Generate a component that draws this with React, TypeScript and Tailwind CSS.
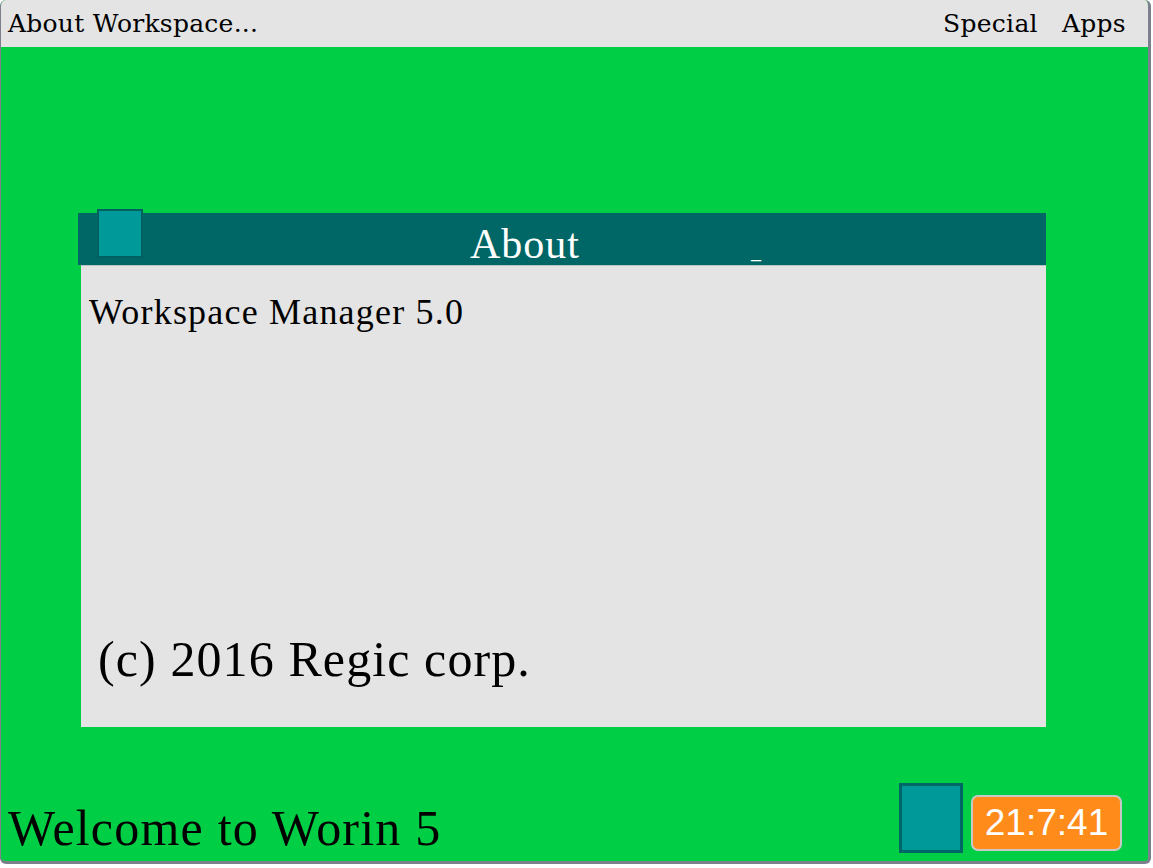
export default function App() {
  return (
    <div className="w-[1153px] h-[868px] bg-white">
      <div className="w-[1151px] h-[864px] flex flex-col overflow-hidden rounded-[6px] border-l border-r-[3px] border-b-[3px] border-[#7c7f8c] bg-[#00ce44]">
        {/* menu bar */}
        <div className="h-[47px] shrink-0 bg-[#e4e4e4] flex items-center pl-[7px] text-black font-['DejaVu_Serif',serif]">
          <span className="text-[25px] tracking-[0.25px]">About Workspace...</span>
          <div className="ml-auto flex gap-[24px] pr-[22px]">
            <span className="text-[25px] tracking-[0.3px]">Special</span>
            <span className="text-[25px] tracking-[0.3px]">Apps</span>
          </div>
        </div>

        {/* desktop */}
        <div className="flex-1 relative font-['Liberation_Serif',serif]">
          <div className="absolute left-[77px] top-[166px] w-[968px]">
            <div className="h-[52px] bg-[#006666] relative">
              <div className="absolute left-[19px] -top-[4px] w-[46px] h-[49px] bg-[#009999] border-2 border-[#006060]" />
              <div className="absolute left-[392px] top-[10px] text-white text-[42px] tracking-[1px] leading-none">About</div>
              <div className="absolute left-[673px] top-[28px] text-white text-[20px] leading-none">_</div>
            </div>
            <div className="ml-[3px] h-[462px] bg-[#e4e4e4] flex flex-col justify-between border-t border-[#b8c4c4]">
              <div className="pl-[8px] pt-[28px] text-[36px] tracking-[1.2px] leading-none text-black">Workspace Manager 5.0</div>
              <div className="pl-[17px] pb-[43px] text-[50px] tracking-[1.1px] leading-none text-black">(c) 2016 Regic corp.</div>
            </div>
          </div>

          <div className="absolute left-0 right-0 bottom-0 flex items-end">
            <div className="pl-[7px] pb-[8px] text-[50px] tracking-[1.2px] leading-none text-black">Welcome to Worin 5</div>
            <div className="ml-auto flex items-end gap-[8px] pr-[26px] pb-[8px]">
              <div className="w-[64px] h-[70px] bg-[#009999] border-[3px] border-[#006666]" />
              <div className="w-[151px] h-[56px] mb-[2px] rounded-[7px] bg-[#ff8c1a] border-2 border-[#c8c8c8] flex items-center justify-center text-white text-[37px] font-['Liberation_Sans',sans-serif]">
                21:7:41
              </div>
            </div>
          </div>
        </div>
      </div>
    </div>
  );
}
